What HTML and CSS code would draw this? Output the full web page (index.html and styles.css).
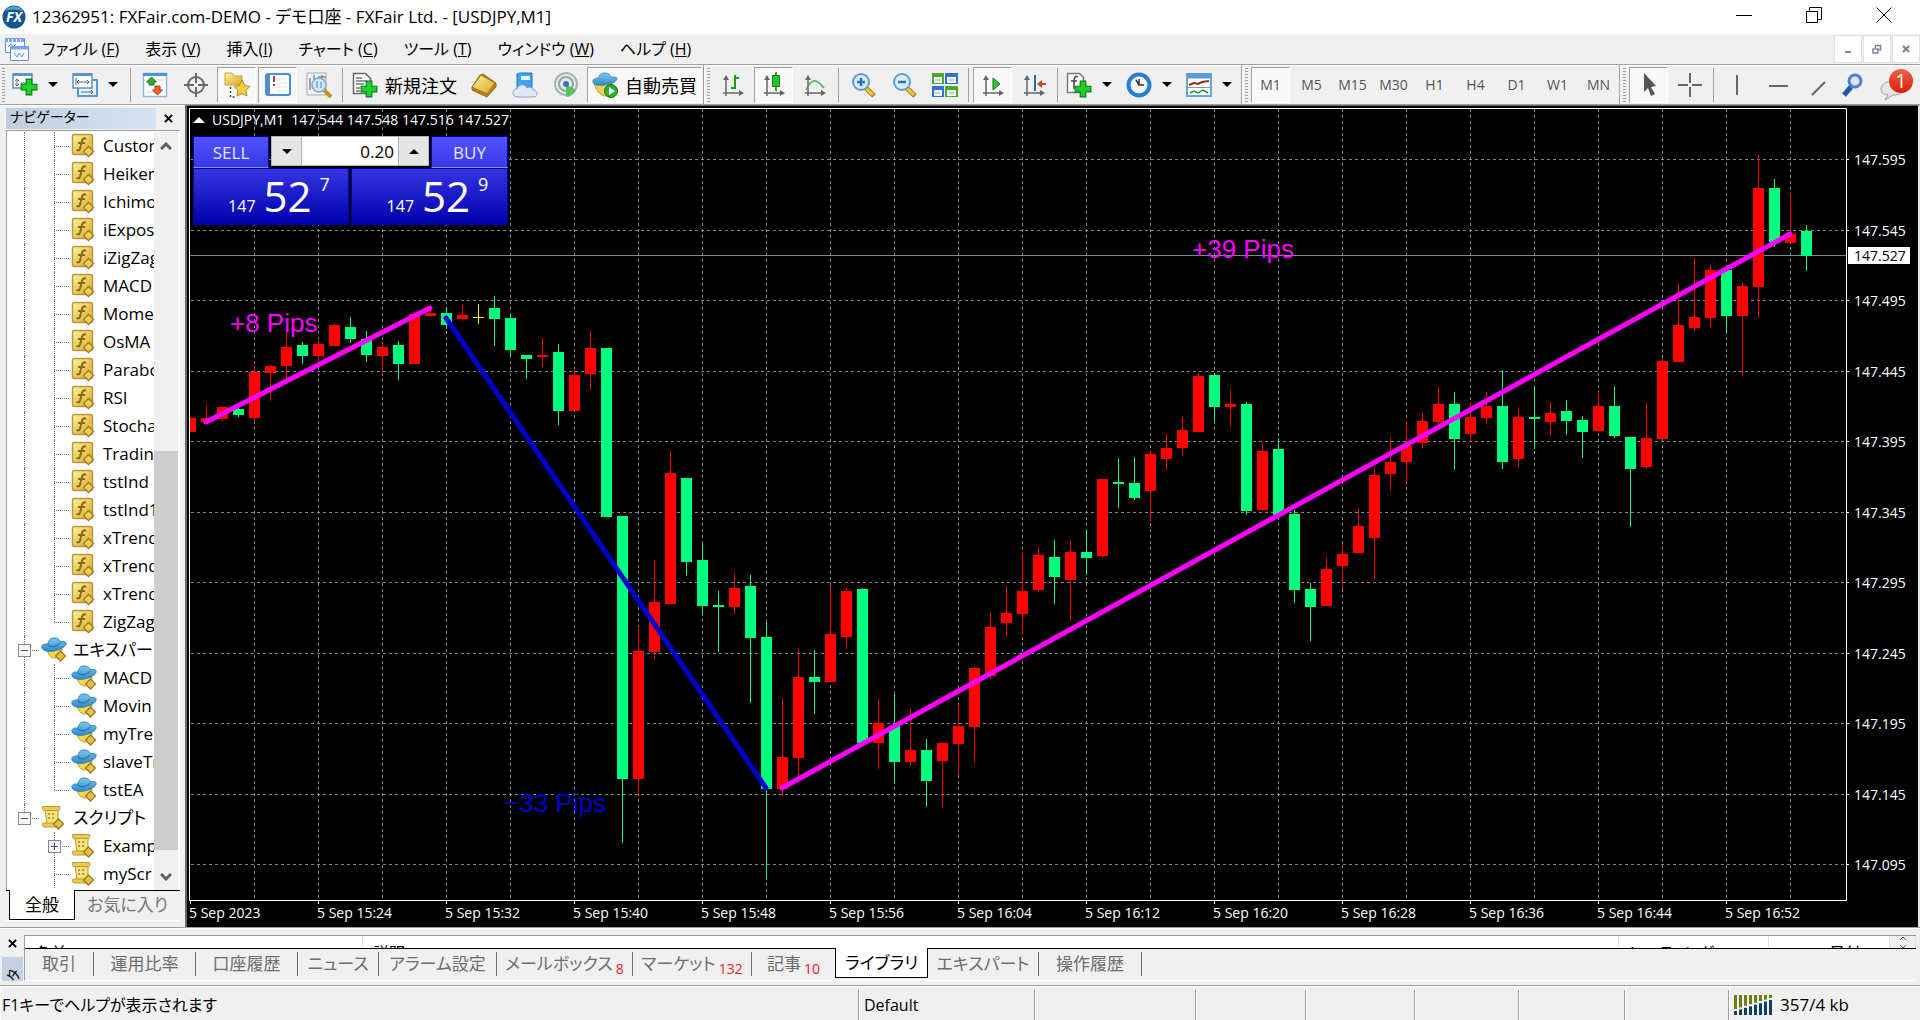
FILE: index.html
```
<!DOCTYPE html>
<html lang="ja">
<head>
    <meta charset="UTF-8">
    <meta name="viewport" content="width=device-width, initial-scale=1.0">
    <title>12362951: FXFair.com-DEMO - デモ口座 - FXFair Ltd. - [USDJPY,M1]</title>
    <link rel="stylesheet" href="styles.css">
</head>
<body>
    <!-- shared icons -->
    <svg class="defs" aria-hidden="true">
        <defs>
            <linearGradient id="gold" x1="0" y1="0" x2="1" y2="1">
                <stop offset="0" stop-color="#fff3a0"/><stop offset="1" stop-color="#d9a520"/>
            </linearGradient>
            <linearGradient id="sky" x1="0" y1="0" x2="0" y2="1">
                <stop offset="0" stop-color="#7cc8f0"/><stop offset="1" stop-color="#2f86c4"/>
            </linearGradient>
            <linearGradient id="red" x1="0" y1="0" x2="0" y2="1">
                <stop offset="0" stop-color="#ee6242"/><stop offset="1" stop-color="#d81e0c"/>
            </linearGradient>
            <symbol id="i-plus" viewBox="0 0 16 16">
                <path d="M5.500 1h5v4.500h4.500v5h-4.500v4.500h-5v-4.500h-4.500v-5h4.500z" fill="#1fd02c" stroke="#0b7a15"/>
            </symbol>
            <symbol id="i-axes" viewBox="0 0 26 26">
                <path d="M6 24V6M3 21h18" fill="none" stroke="#666" stroke-width="1.500"/>
                <path d="M6 3l3 5H3zM24 21l-5-3v6z" fill="#666"/>
            </symbol>
            <symbol id="i-func" viewBox="0 0 26 26">
                <rect x="1.500" y="1.500" width="20" height="20" rx="2" fill="url(#gold)" stroke="#b8963a" stroke-width="1.500"/>
                <path d="M15 6c-3-2-4 1-4.500 4l-1 4c-.5 3-1.500 4-4 3M7 10h7" fill="none" stroke="#8a6c18" stroke-width="2"/>
                <path d="M17.500 13.500l5 5-5 5-5-5z" fill="#f0cf50" stroke="#9a7a2a" stroke-width="1.300"/>
            </symbol>
            <symbol id="i-expert" viewBox="0 0 26 26">
                <path d="M6 12c1 6 4 9 8 9s6-4 7-9z" fill="#f5d94a" stroke="#c09a20"/>
                <path d="M1 11c-1-4 3-4 6-4 1-4 2-6 6-6s6 2 6 4c4-1 7 0 6 2-1 4-8 6-12 7s-11 0-12-3z" fill="url(#sky)" stroke="#2a7fb8"/>
                <path d="M7 8c3 3 9 2 12-2" fill="none" stroke="#1f76ac" stroke-width="1.200"/>
                <path d="M19.500 14l5 5-5 5-5-5z" fill="#e8c040" stroke="#9a7a2a" stroke-width="1.300"/>
            </symbol>
            <symbol id="i-script" viewBox="0 0 26 26">
                <path d="M4 4h13v15H6z" fill="#f5e27a" stroke="#b89a38"/>
                <path d="M1.500 1.500h17c1 3 0 4-2 4H4c-2 0-3-1-2.500-4zM2 18h14v4H3c-2-1-2-3-1-4z" fill="#eccb50" stroke="#b89a38"/>
                <path d="M7 9h2m2 0h2m-6 4h2m2 0h2" stroke="#b89a38" stroke-width="2"/>
                <path d="M17.500 14l5 5-5 5-5-5z" fill="#e8c040" stroke="#9a7a2a" stroke-width="1.300"/>
            </symbol>
            <symbol id="i-lens" viewBox="0 0 26 26">
                <path d="M16 16l8 8" stroke="#b07a10" stroke-width="5"/>
                <path d="M16 16l7 7" stroke="#f5c83a" stroke-width="3"/>
                <circle cx="11" cy="10" r="8" fill="#d6ecfa" stroke="#5a9fd4" stroke-width="2"/>
            </symbol>
            <symbol id="i-close" viewBox="0 0 10 10">
                <path d="M1 1l8 8M9 1L1 9" stroke="currentColor" stroke-width="2.200" fill="none"/>
            </symbol>
        </defs>
    </svg>

    <header class="title-bar">
        <svg class="logo" viewBox="0 0 24 24">
            <circle cx="12" cy="12" r="11.500" fill="#14568e"/>
            <path d="M3 6a11 11 0 0 1 18 0c-6-2-12-2-18 0z" fill="#45a8cf"/>
            <text x="12" y="17" class="logo-text">FX</text>
        </svg>
        <h1>12362951: FXFair.com-DEMO - デモ口座 - FXFair Ltd. - [USDJPY,M1]</h1>
        <div class="window-buttons">
            <button aria-label="最小化"><svg viewBox="0 0 16 16"><path d="M0 8.500h16"/></svg></button>
            <button aria-label="元に戻す"><svg viewBox="0 0 16 16"><path d="M.5 4.500h11v11H.5zM3.500 4V.5h12v12H12"/></svg></button>
            <button aria-label="閉じる"><svg viewBox="0 0 16 16"><path d="M.5.5l15 15M15.500.5l-15 15"/></svg></button>
        </div>
    </header>

    <nav class="menu-bar">
        <svg class="menu-icon" viewBox="0 0 26 26">
            <path d="M1.500 2.500h19v14h-19z" fill="#fff" stroke="#5b8def"/><path d="M1 4h20" stroke="#7ba6f5" stroke-width="4" stroke-dasharray="3 1"/>
            <path d="M4 11l3-3 2 3 3-3" fill="none" stroke="#5b8def"/>
            <path d="M6.500 10.500h18v14h-18z" fill="#fff" stroke="#5b8def"/><path d="M6 12h19" stroke="#7ba6f5" stroke-width="3"/>
            <path d="M10 17l3 4 2-4 3 4 2-4" fill="none" stroke="#5b8def"/>
        </svg>
        <button>ファイル (<u>F</u>)</button>
        <button>表示 (<u>V</u>)</button>
        <button>挿入(<u>I</u>)</button>
        <button>チャート (<u>C</u>)</button>
        <button>ツール (<u>T</u>)</button>
        <button>ウィンドウ (<u>W</u>)</button>
        <button>ヘルプ (<u>H</u>)</button>
        <div class="mdi-buttons">
            <button aria-label="チャートを最小化"><svg viewBox="0 0 10 10"><path d="M2 8h6" stroke-width="2"/></svg></button>
            <button aria-label="チャートを元に戻す"><svg viewBox="0 0 10 10"><path d="M1 5h5v4H1zM3.500 4V1.500h5V6H7" stroke-width="1.500"/></svg></button>
            <button aria-label="チャートを閉じる"><svg viewBox="0 0 10 10"><path d="M2 2l6 6M8 2L2 8" stroke-width="2.200"/></svg></button>
        </div>
    </nav>

    <div class="toolbar">
        <span class="grip"></span>
        <button class="tool drop" aria-label="新規チャート"><svg viewBox="0 0 26 26"><path d="M1 2h19v14H1z" fill="#fff" stroke="#5a96cc" stroke-width="1.500"/><path d="M1 2.500h19" stroke="#5a96cc" stroke-width="3"/><path d="M5 7v7M3 9l2-2 2 2M3 12l2 2 2-2M9 11h8" fill="none" stroke="#567" /><use href="#i-plus" x="8" y="6" width="18" height="18"/></svg></button>
        <button class="tool drop" aria-label="プロファイル"><svg viewBox="0 0 26 26"><path d="M6 8h19v16H6z" fill="#e8f2fb" stroke="#5a96cc" stroke-width="2"/><path d="M1 2h19v14H1z" fill="#fff" stroke="#5a96cc" stroke-width="1.500"/><path d="M1 2.500h19" stroke="#5a96cc" stroke-width="3"/><path d="M4 6v7M5 10h12M7 8l-2 2 2 2M15 8l2 2-2 2M9 20h12M19 18l2 2-2 2" fill="none" stroke="#567"/></svg></button>
        <span class="sep"></span>
        <button class="tool" aria-label="気配値表示"><svg viewBox="0 0 26 26"><path d="M1.500 1.500h23v23h-23z" fill="#fff" stroke="#8ab8e4" stroke-width="1.500"/><path d="M1 2.500h24" stroke="#4a90e0" stroke-width="3"/><path d="M5 20h9M16 8h6" stroke="#ccc"/><path d="M9.500 5l5 5h-2.500v3H7v-3H4.500z" fill="#2eb030" stroke="#147018"/><path d="M15.500 23l5-5h-2.500v-4h-5v4h-2.500z" fill="#f2602c" stroke="#b03410"/></svg></button>
        <button class="tool" aria-label="データウィンドウ"><svg viewBox="0 0 26 26"><circle cx="13" cy="13" r="8" fill="none" stroke="#6a6a6a" stroke-width="2"/><path d="M13 1v10m0 4v10M1 13h10m4 0h10" stroke="#6a6a6a" stroke-width="2"/></svg></button>
        <button class="tool on" aria-label="ナビゲーター"><svg viewBox="0 0 26 26"><path d="M1 1h7l2 3h8v9H1z" fill="url(#gold)" stroke="#c8a440"/><path d="M6.500 15v10h6" fill="none" stroke="#444" stroke-width="1.500" stroke-dasharray="2"/><path d="M18 8l2.800 5.600 5 .8-3.800 4 1 5.600-5-2.500-5 2.500 1-5.600-3.800-4 5-.8z" fill="#f8d038" stroke="#b08a28"/></svg></button>
        <button class="tool on" aria-label="ターミナル"><svg viewBox="0 0 26 26"><rect x="1" y="2" width="24" height="21" rx="2" fill="#fff" stroke="#4a90d8" stroke-width="2"/><path d="M3.500 3v19" stroke="#5a8cc0" stroke-width="3"/><path d="M8 5h2M8 9h2" stroke="#222" stroke-width="1.500"/><path d="M8 7h2M8 13h2" stroke="#e22" stroke-width="2"/><path d="M12 7h10M12 11h10M12 15h10M12 19h10" stroke="#dde4ec"/></svg></button>
        <button class="tool" aria-label="ストラテジーテスター"><svg viewBox="0 0 26 26"><path d="M1 1h19v22H1z" fill="#f4f4f0" stroke="#aaa"/><path d="M4 6v12M8 3v6M16 3v6M12 5h8" stroke="#789" stroke-width="1.500"/><path d="M18 18l7 7" stroke="#c8921a" stroke-width="4"/><circle cx="13" cy="13" r="7" fill="#cfe6f8" stroke="#7aa8d0" stroke-width="1.500"/><path d="M11 9v7M15 10v6" stroke="#7aa8d0" stroke-width="1.500"/></svg></button>
        <span class="sep"></span>
        <button class="tool wide"><svg viewBox="0 0 26 26"><path d="M1.500 1.500h12l5 5v15h-17z" fill="#fff" stroke="#666" stroke-width="1.500"/><path d="M4 6h6M4 9h11M4 12h8M4 16h4M4 19h4" stroke="#777" stroke-width="1.500"/><use href="#i-plus" x="8" y="8" width="18" height="18"/></svg>新規注文</button>
        <button class="tool" aria-label="MetaEditor"><svg viewBox="0 0 26 26"><path d="M1 15L9 3l3-1 13 9v4l-9 10L1 18z" fill="#b8801a" stroke="#a06c18"/><path d="M1 15L10 3l14 8-8 11z" fill="url(#gold)" stroke="#a87818"/></svg></button>
        <button class="tool" aria-label="仮想ホスティング"><svg viewBox="0 0 26 26"><path d="M5 2l3-1h12v17H5z" fill="#3ca4f0" stroke="#1a76c0"/><path d="M9 4h9v4H9z" fill="#e8f4ff"/><path d="M6 25c-7 0-6-8-1-8 1-5 8-6 10-1 4-2 6 1 6 2 5 0 5 7 1 7z" fill="#dfe8f4" stroke="#8a9fc0"/></svg></button>
        <button class="tool" aria-label="シグナル"><svg viewBox="0 0 26 26"><circle cx="13" cy="12" r="11" fill="#e4e8e8" stroke="#aab2b2" stroke-width="2"/><circle cx="13" cy="12" r="7" fill="none" stroke="#8aaaa0" stroke-width="2"/><path d="M13 12l10 6c-2 4-6 7-10 7z" fill="#5ac060"/><circle cx="13" cy="12" r="3" fill="#3e72b8"/></svg></button>
        <button class="tool wide on"><svg viewBox="0 0 26 26"><path d="M2 11c3 10 8 13 12 13s6-4 7-11z" fill="#f0d050" stroke="#b89420"/><path d="M1 10c-1-3 3-4 6-4 0-3 2-5 6-5s5 2 6 4c4 0 6 0 6 2-1 4-8 5-12 6s-11 1-12-3z" fill="url(#sky)" stroke="#4a8fbe"/><circle cx="19" cy="19" r="6.500" fill="#28b030" stroke="#127018"/><path d="M17 15l6 4-6 4z" fill="#fff"/></svg>自動売買</button>
        <span class="split"></span>
        <span class="grip"></span>
        <button class="tool" aria-label="バーチャート"><svg viewBox="0 0 26 26"><use href="#i-axes"/><path d="M15 3v14M15 6h4M11 16h4" fill="none" stroke="#1a9a20" stroke-width="2"/></svg></button>
        <button class="tool on" aria-label="ローソク足"><svg viewBox="0 0 26 26"><use href="#i-axes"/><path d="M15 0v19" stroke="#107818" stroke-width="1.500"/><path d="M11.500 3.500h7v11h-7z" fill="#22c430" stroke="#107818"/></svg></button>
        <button class="tool" aria-label="ラインチャート"><svg viewBox="0 0 26 26"><use href="#i-axes"/><path d="M4 18c6-12 10-12 18-2" fill="none" stroke="#4aa850" stroke-width="1.500"/></svg></button>
        <span class="sep"></span>
        <button class="tool" aria-label="拡大"><svg viewBox="0 0 26 26"><use href="#i-lens"/><path d="M11 6v8M7 10h8" stroke="#2a72b8" stroke-width="2.500"/></svg></button>
        <button class="tool" aria-label="縮小"><svg viewBox="0 0 26 26"><use href="#i-lens"/><path d="M7 10h8" stroke="#2a72b8" stroke-width="2.500"/></svg></button>
        <button class="tool" aria-label="整列"><svg viewBox="0 0 26 26"><path d="M0 1h12v11H0zM13 14h13v11H13z" fill="#4fa828"/><path d="M13 1h13v11H13zM0 14h12v11H0z" fill="#3370d8"/><path d="M2 5h8v6H2zM15 5h9v6h-9zM2 18h8v6H2zM15 18h9v6h-9z" fill="#f2f6f0"/><path d="M3 8h5M17 8h5M3 21h5M17 21h5" stroke="#9ab"/></svg></button>
        <span class="sep"></span>
        <button class="tool on" aria-label="自動スクロール"><svg viewBox="0 0 26 26"><use href="#i-axes"/><path d="M13 6l7 6-7 6z" fill="#32c440" stroke="#107818"/></svg></button>
        <button class="tool" aria-label="チャートシフト"><svg viewBox="0 0 26 26"><use href="#i-axes"/><path d="M14 3v16" stroke="#2a6a9a" stroke-width="2"/><path d="M16 12l5-4v3h4v2h-4v3z" fill="#c8401c"/></svg></button>
        <span class="sep"></span>
        <button class="tool drop" aria-label="インディケーター"><svg viewBox="0 0 26 26"><path d="M1.500 1.500h12l4 4v15h-16z" fill="#fff" stroke="#777" stroke-width="1.500"/><path d="M12 5c-3-2-4 1-4 4v8M5 9h6" fill="none" stroke="#444" stroke-width="1.500"/><use href="#i-plus" x="8" y="8" width="18" height="18"/></svg></button>
        <button class="tool drop" aria-label="時間足設定"><svg viewBox="0 0 26 26"><circle cx="13" cy="13" r="10.500" fill="#f2f6fa" stroke="#2a7ad8" stroke-width="4"/><path d="M13 7v6h5M13 13l-3-5" fill="none" stroke="#333" stroke-width="1.500"/></svg></button>
        <button class="tool drop" aria-label="定型チャート"><svg viewBox="0 0 26 26"><path d="M1 2h24v22H1z" fill="#fff" stroke="#6aa4dc" stroke-width="2"/><path d="M1 4h24" stroke="#5a9ae0" stroke-width="5"/><path d="M3 13l5-2 4 1 4-2 7-1" fill="none" stroke="#a02818" stroke-width="2"/><path d="M1 15.500h24" stroke="#6aa0d0"/><path d="M4 21l4-2 4 2 5-3 5 3" fill="none" stroke="#2a9030" stroke-width="1.500"/></svg></button>
        <span class="split"></span>
        <span class="grip"></span>
        <button class="tool period on">M1</button>
        <button class="tool period">M5</button>
        <button class="tool period">M15</button>
        <button class="tool period">M30</button>
        <button class="tool period">H1</button>
        <button class="tool period">H4</button>
        <button class="tool period">D1</button>
        <button class="tool period">W1</button>
        <button class="tool period">MN</button>
        <span class="split"></span>
        <span class="grip"></span>
        <button class="tool on" aria-label="カーソル"><svg viewBox="0 0 26 26"><path d="M8 1v19l4-4 3 8 4-2-4-7 5-1z" fill="#555"/></svg></button>
        <button class="tool" aria-label="クロスヘア"><svg viewBox="0 0 26 26"><path d="M13 1v10m0 4v10M1 13h10m4 0h10" stroke="#666" stroke-width="2"/></svg></button>
        <span class="sep"></span>
        <button class="tool" aria-label="垂直線"><svg viewBox="0 0 26 26"><path d="M12 3v20" stroke="#666" stroke-width="2"/></svg></button>
        <button class="tool" aria-label="水平線"><svg viewBox="0 0 26 26"><path d="M3 14h19" stroke="#666" stroke-width="2"/></svg></button>
        <button class="tool" aria-label="トレンドライン"><svg viewBox="0 0 26 26"><path d="M5 23L18 10" stroke="#666" stroke-width="2"/></svg></button>
        <button class="tool narrow" aria-label="検索"><svg viewBox="0 0 26 26"><path d="M3 23l7-8" stroke="#2456b0" stroke-width="5"/><circle cx="14" cy="9" r="6" fill="#dbe8fa" stroke="#4a7ed8" stroke-width="3"/></svg></button>
        <button class="tool chat" aria-label="メッセージ 1件"><svg viewBox="0 0 36 32"><path d="M13 12c-14 1-14 14-4 14l-3 5 8-5c8 0 12-3 10-8z" fill="#e4e4ea" stroke="#9c9ca4"/><circle cx="22" cy="12" r="12" fill="url(#red)"/><text x="22" y="19" class="badge-text">1</text></svg></button>
    </div>

    <main class="workspace">
        <aside class="navigator">
            <header class="panel-header">
                <h2>ナビゲーター</h2>
                <button class="close" aria-label="ナビゲーターを閉じる"><svg><use href="#i-close"/></svg></button>
            </header>
            <div class="tree-box">
                <ul class="tree" id="tree"></ul>
                <div class="scrollbar">
                    <svg viewBox="0 0 12 8"><path d="M1 7l5-5 5 5"/></svg>
                    <span class="thumb"></span>
                    <svg viewBox="0 0 12 8"><path d="M1 1l5 5 5-5"/></svg>
                </div>
            </div>
            <div class="nav-tabs">
                <button class="active">全般</button>
                <button>お気に入り</button>
            </div>
        </aside>

        <section class="chart">
            <svg id="plot"></svg>
            <div class="chart-title">
                <svg viewBox="0 0 12 6"><path d="M0 6l6-6 6 6z" fill="#fff"/></svg>
                <span>USDJPY,M1</span>
                <span>147.544 147.548 147.516 147.527</span>
            </div>
            <div class="one-click">
                <button class="side">SELL</button>
                <div class="lots">
                    <button aria-label="減らす"><svg viewBox="0 0 10 5"><path d="M0 0h10L5 5z"/></svg></button>
                    <input type="text" value="0.20" aria-label="ロット">
                    <button aria-label="増やす"><svg viewBox="0 0 10 5"><path d="M0 5h10L5 0z"/></svg></button>
                </div>
                <button class="side">BUY</button>
                <button class="price"><small>147</small><b>52</b><sup>7</sup></button>
                <button class="price"><small>147</small><b>52</b><sup>9</sup></button>
            </div>
        </section>
    </main>

    <section class="terminal">
        <div class="terminal-side">
            <button class="close" aria-label="ターミナルを閉じる"><svg><use href="#i-close"/></svg></button>
            <span class="side-label">ターミナル</span>
        </div>
        <div class="terminal-main">
            <div class="columns">
                <span class="name">名前</span>
                <span class="desc">説明</span>
                <span class="rating">レーティング</span>
                <span class="date">日付</span>
                <span class="up"><svg viewBox="0 0 8 12"><path d="M1 4l3-3 3 3M1 9l3 3 3-3"/></svg></span>
            </div>
            <div class="tabs">
                <button>取引</button>
                <button>運用比率</button>
                <button>口座履歴</button>
                <button>ニュース</button>
                <button>アラーム設定</button>
                <button>メールボックス<i>8</i></button>
                <button>マーケット<i>132</i></button>
                <button>記事<i>10</i></button>
                <button class="active">ライブラリ</button>
                <button>エキスパート</button>
                <button>操作履歴</button>
            </div>
        </div>
    </section>

    <footer class="status-bar">
        <span>F1キーでヘルプが表示されます</span>
        <span>Default</span>
        <span></span>
        <span></span>
        <span></span>
        <span></span>
        <span></span>
        <span></span>
        <span class="traffic"><svg id="signal" viewBox="0 0 40 20"></svg>357/4 kb</span>
    </footer>

    <script>
        // navigator: [level, icon, label, box, last child]
        const nodes = [
            [2, 'func', 'Custom'], [2, 'func', 'Heiken'], [2, 'func', 'Ichimoku'],
            [2, 'func', 'iExpos'], [2, 'func', 'iZigZag'], [2, 'func', 'MACD'],
            [2, 'func', 'Mome'], [2, 'func', 'OsMA'], [2, 'func', 'Parabo'],
            [2, 'func', 'RSI'], [2, 'func', 'Stocha'], [2, 'func', 'Tradin'],
            [2, 'func', 'tstInd'], [2, 'func', 'tstInd1'], [2, 'func', 'xTrend'],
            [2, 'func', 'xTrend'], [2, 'func', 'xTrend'], [2, 'func', 'ZigZag', '', 'last'],
            [1, 'expert', 'エキスパート', '−'],
            [2, 'expert', 'MACD'], [2, 'expert', 'Movin'], [2, 'expert', 'myTre'],
            [2, 'expert', 'slaveTr'], [2, 'expert', 'tstEA', '', 'last'],
            [1, 'script', 'スクリプト', '−', 'last'],
            [2, 'script', 'Examp', '+'], [2, 'script', 'myScr']
        ];
        let rootOpen = true;
        document.getElementById('tree').innerHTML = nodes.map(([level, icon, label, box, last]) => {
            const sign = box === '+' ? '<path d="M3 6.500h7M6.500 3v7"/>' : '<path d="M3 6.500h7"/>';
            const toggle = box ? `<svg class="toggle" viewBox="0 0 13 13"><rect x=".5" y=".5" width="12" height="12"/>${sign}</svg>` : '';
            const branch = `<span class="guide branch ${last || ''}">${toggle}</span>`;
            const trunk = `<span class="guide ${rootOpen ? 'trunk' : ''}"></span>`;
            if (level === 1 && last) rootOpen = false;
            return `<li>${level === 2 ? trunk : ''}${branch}<svg class="node"><use href="#i-${icon}"/></svg><span>${label}</span></li>`;
        }).join('');

        // candles: colour, high, body top, body bottom, low
        const candles = [
            ['r',418,418,432,432], ['r',406,418,422,422], ['r',406,407,419,421], ['g',407,409,415,417],
            ['r',365,372,418,422], ['r',365,366,373,401], ['r',332,347,366,380], ['g',342,345,356,364],
            ['r',339,344,356,363], ['r',324,325,346,346], ['g',317,327,339,343], ['g',331,339,355,362],
            ['r',341,347,356,374], ['g',341,345,364,380], ['r',311,314,364,364], ['r',310,313,316,316],
            ['g',307,313,325,329], ['r',304,315,319,321], ['y',304,317,318,324], ['g',296,308,319,346],
            ['g',314,318,350,355], ['g',355,355,359,379], ['r',338,355,357,367], ['g',344,352,411,425],
            ['r',369,375,411,411], ['r',331,348,374,390], ['g',348,348,517,517], ['g',516,516,779,843],
            ['r',627,651,779,795], ['r',560,602,652,659], ['r',451,473,604,604], ['g',478,478,562,576],
            ['g',544,560,606,614], ['g',591,605,607,652], ['r',574,588,607,614], ['g',575,586,638,703],
            ['g',622,637,789,879], ['r',698,757,789,796], ['r',648,677,758,780], ['g',650,677,682,714],
            ['r',586,634,682,682], ['r',588,591,637,649], ['g',588,589,743,743], ['r',699,723,743,769],
            ['g',694,726,762,783], ['r',709,750,762,766], ['g',739,750,781,807], ['r',743,743,761,807],
            ['r',705,726,744,775], ['r',667,668,727,762], ['r',613,627,676,679], ['r',586,613,623,637],
            ['r',552,591,614,635], ['r',547,555,590,592], ['g',540,557,577,604], ['r',541,552,580,621],
            ['g',530,552,558,575], ['r',479,479,556,558], ['g',458,482,484,508], ['g',457,483,498,500],
            ['r',451,454,491,522], ['r',434,448,459,470], ['r',416,430,448,455], ['r',373,376,432,432],
            ['g',373,375,407,421], ['r',390,404,407,426], ['g',402,404,511,515], ['r',442,451,510,511],
            ['g',438,449,515,515], ['g',510,514,590,603], ['g',583,589,607,641], ['r',558,569,606,606],
            ['r',545,554,566,589], ['r',509,526,553,553], ['r',468,475,538,579], ['r',438,462,474,490],
            ['r',421,446,462,483], ['r',413,421,443,448], ['r',387,404,422,425], ['g',392,404,439,470],
            ['r',403,417,434,443], ['r',392,406,418,424], ['g',370,406,462,469], ['r',407,417,459,467],
            ['g',387,417,419,449], ['r',402,413,422,435], ['g',400,411,421,435], ['g',416,420,432,458],
            ['r',392,406,431,431], ['g',386,406,436,438], ['g',437,437,469,527], ['r',403,438,467,469],
            ['r',359,361,439,439], ['r',284,325,362,362], ['r',258,317,328,331], ['r',265,270,318,328],
            ['g',268,270,316,333], ['r',283,286,316,376], ['r',155,188,287,318], ['g',179,188,242,247],
            ['r',194,234,243,243], ['g',225,231,256,271]
        ];
        const colors = { r: '#ff0000', g: '#00ff7f', y: '#ffff00' };
        const times = ['2023', '15:24', '15:32', '15:40', '15:48', '15:56', '16:04', '16:12', '16:20', '16:28', '16:36', '16:44', '16:52'];

        function drawChart() {
            const plot = document.getElementById('plot');
            const right = plot.clientWidth - 72;
            const bottom = plot.clientHeight - 27;
            const kx = (right - 3) / 1656;
            const ky = (bottom - 2) / 792;
            const X = bar => Math.round(3 + bar * 16 * kx);
            const Y = v => Math.round(2 + (v - 108) * ky);
            let s = '';

            for (let bar = 4; bar <= 100; bar += 4) {
                s += `<path class="grid" d="M${X(bar) + .5} 3V${bottom}"/>`;
            }
            for (let i = 0; i <= 10; i++) {
                const y = Y(159 + i * 70.5);
                s += `<path class="grid" d="M4 ${y + .5}H${right}"/><path class="axis" d="M${right} ${y + .5}h3"/>`;
                s += `<text class="label" x="${right + 8}" y="${y + 6}">${(147.595 - i * .05).toFixed(3)}</text>`;
            }
            times.forEach((t, i) => {
                const x = X(i * 8);
                s += `<path class="axis" d="M${x + .5} ${bottom}v4"/><text class="label" x="${x - 1}" y="${bottom + 18}">5 Sep ${t}</text>`;
            });
            s += `<path class="bid" d="M3 ${Y(255) + .5}H${right}"/>`;

            candles.forEach(([c, high, top, low, bot], bar) => {
                const x = X(bar);
                const left = Math.max(3, x - 5);
                s += `<rect x="${x}" y="${Y(high)}" width="1" height="${Y(bot) - Y(high)}" fill="${colors[c]}"/>`;
                s += `<rect x="${left}" y="${Y(top)}" width="${x + 6 - left}" height="${Y(low) - Y(top)}" fill="${colors[c]}"/>`;
            });

            const trade = (a, ya, b, yb, cls) => `<path class="trade ${cls}" d="M${X(a)} ${Y(ya)}L${X(b)} ${Y(yb)}"/>`;
            s += trade(1, 422, 15, 308, 'win') + trade(16, 318, 36, 788, 'loss') + trade(37, 788, 100, 234, 'win');
            s += `<text class="pips win" x="${X(2.5)}" y="${Y(332)}">+8 Pips</text>`;
            s += `<text class="pips loss" x="${X(19.6)}" y="${Y(812)}">−33 Pips</text>`;
            s += `<text class="pips win" x="${X(62.6)}" y="${Y(258)}">+39 Pips</text>`;

            s += `<path class="axis" d="M2.500 ${bottom + .5}V2.500H${right + .5}V${bottom + .5}z"/>`;
            s += `<rect x="${right + 2}" y="${Y(255) - 8}" width="62" height="17" fill="#fff"/>`;
            s += `<text class="label now" x="${right + 8}" y="${Y(255) + 6}">147.527</text>`;
            plot.innerHTML = s;
        }
        drawChart();
        window.addEventListener('resize', drawChart);

        let bars = '';
        for (let i = 0; i < 8; i++) {
            const cut = 15 - i * 11 / 7;
            bars += `<rect x="${i * 5}" y="0" width="3" height="${cut - 1}" fill="#6b7f10"/>`;
            bars += `<rect x="${i * 5}" y="${cut + 1}" width="3" height="${19 - cut}" fill="#0f4060"/>`;
        }
        document.getElementById('signal').innerHTML = bars;
    </script>
</body>
</html>
```

FILE: styles.css
```
* {
    box-sizing: border-box;
}
body {
    margin: 0;
    height: 100vh;
    display: flex;
    flex-direction: column;
    overflow: hidden;
    background: #f0f0f0;
    color: #000;
    font-family: "Open Sans", "Noto Sans CJK JP", sans-serif;
    font-size: 16px;
    font-feature-settings: "palt";
}
button {
    margin: 0;
    padding: 0;
    border: 0;
    background: none;
    color: inherit;
    font: inherit;
    font-feature-settings: inherit;
    white-space: nowrap;
}
h1, h2, ul {
    margin: 0;
    padding: 0;
    font-weight: normal;
}
.defs {
    position: absolute;
    width: 0;
    height: 0;
}

/* title and menu */
.title-bar {
    display: flex;
    align-items: center;
    flex: none;
    height: 34px;
    padding-left: 2px;
    background: #fff;
}
.title-bar h1 {
    flex: 1;
    margin-left: 6px;
    font-size: 17px;
    line-height: 34px;
}
.logo {
    width: 24px;
    height: 24px;
}
.logo-text {
    fill: #fff;
    font-size: 14px;
    font-style: italic;
    font-weight: bold;
    text-anchor: middle;
}
.window-buttons {
    display: flex;
    margin-right: 1px;
}
.window-buttons button {
    width: 70px;
    height: 34px;
}
.window-buttons svg {
    width: 16px;
    height: 16px;
    fill: none;
    stroke: #000;
}
.menu-bar {
    display: flex;
    align-items: center;
    flex: none;
    gap: 26px;
    height: 30px;
    padding-left: 4px;
    line-height: 30px;
}
.menu-icon {
    width: 26px;
    height: 26px;
    margin-right: -14px;
}
.mdi-buttons {
    display: flex;
    gap: 1px;
    margin-left: auto;
}
.mdi-buttons button {
    display: grid;
    place-items: center;
    width: 28px;
    height: 28px;
    border: 1px solid #e2e2e2;
    background: #fff;
}
.mdi-buttons svg {
    width: 10px;
    height: 10px;
    fill: none;
    stroke: #75879a;
}

/* toolbar */
.toolbar {
    display: flex;
    align-items: center;
    flex: none;
    height: 41px;
    border-top: 1px solid #a0a0a0;
    border-bottom: 1px solid #a0a0a0;
    box-shadow: inset 0 1px #fff;
}
.grip {
    flex: none;
    width: 3px;
    height: 34px;
    margin: 0 2px;
    background: repeating-linear-gradient(#a0a0a0 0 1px, #f0f0f0 1px 3px);
}
.sep {
    flex: none;
    width: 1px;
    height: 34px;
    margin: 0 3px;
    background: #a0a0a0;
}
.split {
    flex: none;
    width: 2px;
    height: 39px;
    border-left: 1px solid #a0a0a0;
    background: #fff;
}
.tool {
    display: flex;
    align-items: center;
    justify-content: center;
    flex: none;
    width: 39px;
    height: 36px;
    margin: 0 1px;
    border: 1px solid transparent;
}
.tool svg {
    flex: none;
    width: 26px;
    height: 26px;
}
.tool.on {
    border-color: #a0a0a0 #fff #fff #a0a0a0;
    background: #f8f8f8;
}
.tool.drop {
    gap: 10px;
    width: 58px;
    padding-right: 4px;
}
.tool.drop::after {
    content: "";
    border: 5px solid transparent;
    border-top-color: #000;
    border-bottom: 0;
}
.tool.wide {
    gap: 7px;
    width: auto;
    padding: 0 4px;
    font-size: 18px;
}
.tool.narrow {
    width: 26px;
}
.tool.chat {
    width: 46px;
    margin-left: 6px;
}
.tool.chat svg {
    width: 36px;
    height: 32px;
}
.badge-text {
    fill: #fff;
    font-size: 20px;
    text-anchor: middle;
}
.period {
    color: #555;
    font-size: 14px;
    font-weight: 500;
}

/* navigator */
.workspace {
    display: flex;
    flex: 1;
    min-height: 0;
}
.navigator {
    display: flex;
    flex-direction: column;
    flex: none;
    width: 185px;
    padding: 2px 5px 6px 6px;
    border-top: 1px solid #fff;
}
.panel-header {
    display: flex;
    height: 21px;
}
.panel-header h2 {
    flex: 1;
    padding-left: 4px;
    background: linear-gradient(90deg, #bfcddd, #d6e4f2);
    font-size: 14px;
    line-height: 18px;
}
.panel-header .close {
    width: 24px;
}
.close {
    display: grid;
    place-items: center;
}
.close svg {
    width: 9px;
    height: 9px;
}
.tree-box {
    display: flex;
    flex: 1;
    min-height: 0;
    margin-top: 1px;
    padding-top: 1px;
    border-top: 1px solid #a0a0a0;
    border-left: 1px solid #a0a0a0;
    background: #fff;
}
.tree {
    flex: 1;
    min-width: 0;
    padding-left: 2px;
    overflow: hidden;
    list-style: none;
}
.tree li {
    display: flex;
    align-items: center;
    height: 28px;
    font-size: 17px;
    line-height: 28px;
    white-space: nowrap;
}
.guide {
    position: relative;
    display: grid;
    place-items: center;
    flex: none;
    width: 30px;
    height: 28px;
}
.trunk::before, .branch::before {
    content: "";
    position: absolute;
    top: 0;
    bottom: 0;
    left: 15px;
    border-left: 1px dotted #777;
}
.branch.last::before {
    bottom: 14px;
}
.branch::after {
    content: "";
    position: absolute;
    top: 14px;
    right: 0;
    left: 15px;
    border-top: 1px dotted #777;
}
.toggle {
    position: relative;
    z-index: 1;
    width: 13px;
    height: 13px;
    fill: #f6f6f6;
    stroke: #888;
}
.toggle path {
    stroke: #3050a0;
}
.node {
    flex: none;
    width: 26px;
    height: 26px;
    margin: 0 6px 0 2px;
}
.scrollbar {
    display: flex;
    flex-direction: column;
    align-items: center;
    width: 24px;
    margin-right: 2px;
    padding: 10px 0 9px;
    background: #f0f0f0;
}
.scrollbar svg {
    flex: none;
    width: 12px;
    height: 8px;
    fill: none;
    stroke: #606060;
    stroke-width: 3px;
}
.thumb {
    width: 24px;
    height: 54%;
    margin: auto 0 23px;
    background: #cdcdcd;
}
.nav-tabs {
    display: flex;
    height: 31px;
    padding-left: 3px;
    border-bottom: 1px solid #fff;
    background: linear-gradient(#000, #000) 0 0 / 100% 1px no-repeat;
    color: #777;
    font-size: 17px;
    line-height: 30px;
}
.nav-tabs button {
    flex: 1;
    height: 30px;
}
.nav-tabs .active {
    flex: none;
    width: 66px;
    border: 1px solid #000;
    border-top: 0;
    background: #fff;
    color: #000;
}

/* chart */
.chart {
    position: relative;
    flex: 1;
    min-width: 0;
    border-top: 1px solid #696969;
    border-right: 2px solid #e3e3e3;
    border-left: 2px solid #696969;
    background: #000;
    color: #fff;
}
#plot {
    display: block;
    width: 100%;
    height: 100%;
}
.grid {
    stroke: #778899;
    stroke-dasharray: 3 3;
    fill: none;
}
.bid {
    stroke: #778899;
}
.axis {
    stroke: #fff;
    fill: none;
}
.label {
    fill: #fff;
    font-size: 14px;
}
.label.now {
    fill: #000;
}
.trade {
    fill: none;
    stroke-width: 5px;
    stroke-linecap: round;
}
.trade.win {
    stroke: #ff00ff;
}
.trade.loss {
    stroke: #0000cd;
}
.pips {
    font-family: "Liberation Sans", sans-serif;
    font-size: 26px;
}
.pips.win {
    fill: #ff00ff;
}
.pips.loss {
    fill: #0000cd;
}
.chart-title {
    position: absolute;
    top: 4px;
    left: 6px;
    display: flex;
    align-items: center;
    gap: 7px;
    font-size: 14px;
    line-height: 20px;
}
.chart-title svg {
    width: 12px;
    height: 6px;
}
.one-click {
    position: absolute;
    top: 30px;
    left: 6px;
    display: grid;
    grid-template-columns: 76px 80px 2px 80px 77px;
    grid-template-rows: 32px 57px;
}
.side {
    border: 1px solid #0000b4;
    border-bottom: 1px solid #8c8cff;
    background: linear-gradient(#5252ff, #3838e4);
    color: #e6e6ff;
    font-size: 17px;
}
.lots {
    grid-column: 2 / 5;
    display: flex;
    height: 30px;
    margin: 0 2px;
    border: 1px solid #b4b4b4;
    background: #e6e6e6;
}
.lots button {
    display: grid;
    place-items: center;
    width: 29px;
}
.lots svg {
    width: 10px;
    height: 5px;
}
.lots input {
    flex: 1;
    min-width: 0;
    padding: 0 4px;
    border: 1px solid #b4b4b4;
    border-width: 0 1px;
    font: inherit;
    font-size: 17px;
    text-align: right;
}
.price {
    grid-column: 1 / 3;
    display: flex;
    align-items: baseline;
    justify-content: center;
    gap: 8px;
    padding-left: 16px;
    border: 1px solid #0000a0;
    background: linear-gradient(#3434e0, #0000ac);
    color: #fff;
    line-height: 54px;
}
.price ~ .price {
    grid-column: 4 / 6;
}
.price small {
    font-size: 16px;
}
.price b {
    font-size: 42px;
    font-weight: normal;
}
.price sup {
    align-self: flex-start;
    font-size: 18px;
    line-height: 30px;
}

/* terminal */
.terminal {
    display: flex;
    flex: none;
    height: 59px;
    border-top: 1px solid #a0a0a0;
    border-bottom: 1px solid #a0a0a0;
    box-shadow: inset 0 1px #fff;
}
.terminal-side {
    display: flex;
    flex-direction: column;
    align-items: center;
    width: 24px;
    padding: 9px 0 4px;
}
.terminal-side .close {
    width: 20px;
    height: 12px;
}
.side-label {
    width: 21px;
    height: 24px;
    margin-top: auto;
    overflow: hidden;
    background: #c3d1e2;
    font-size: 14px;
    line-height: 21px;
    text-orientation: sideways;
    transform: rotate(180deg);
    writing-mode: vertical-rl;
}
.terminal-main {
    flex: 1;
    min-width: 0;
    margin: 7px 4px 4px 0;
    border-top: 1px solid #a0a0a0;
    border-left: 1px solid #a0a0a0;
    border-bottom: 1px solid #fff;
}
.columns {
    display: grid;
    grid-template-columns: 338px 1fr 150px 121px 26px;
    height: 13px;
    overflow: hidden;
    border-bottom: 1px solid #000;
    background: #fff;
    line-height: 34px;
}
.columns span {
    padding: 0 8px 0 10px;
    border-right: 1px solid #e0e0e0;
}
.columns .date {
    padding-right: 28px;
    text-align: right;
}
.columns .up {
    padding: 0;
    background: #f0f0f0;
    line-height: 12px;
    text-align: center;
}
.up svg {
    width: 8px;
    height: 12px;
    fill: none;
    stroke: #555;
}
.tabs {
    display: grid;
    grid-template-columns: 69px 102px 102px 81px 118px 136px 119px 83px 93px 111px 103px;
    height: 30px;
    color: #6d6d6d;
    font-size: 17px;
    line-height: 24px;
}
.tabs button {
    height: 24px;
    margin-top: 3px;
    border-right: 1px solid #6d6d6d;
}
.tabs .active {
    height: 30px;
    margin-top: -1px;
    border: 1px solid #000;
    border-top: 0;
    background: #fff;
    color: #000;
}
.tabs button:nth-child(8) {
    border-right: 0;
}
.tabs i {
    position: relative;
    top: 4px;
    margin-left: 3px;
    color: #ed1c24;
    font-size: 14px;
    font-style: normal;
}

/* status bar */
.status-bar {
    display: grid;
    grid-template-columns: 1fr 176px 161px 110px 109px 104px 106px 104px 192px;
    flex: none;
    height: 34px;
    padding: 4px 0 2px;
    box-shadow: inset 0 1px #fff;
    line-height: 30px;
}
.status-bar span {
    padding-left: 5px;
    border-left: 1px solid #a0a0a0;
    box-shadow: inset 1px 0 #fff;
}
.status-bar span:first-child {
    padding-left: 2px;
    border-left: 0;
}
.status-bar .traffic {
    display: flex;
    align-items: center;
    gap: 6px;
    font-size: 17px;
}
.traffic svg {
    width: 40px;
    height: 20px;
}
```
